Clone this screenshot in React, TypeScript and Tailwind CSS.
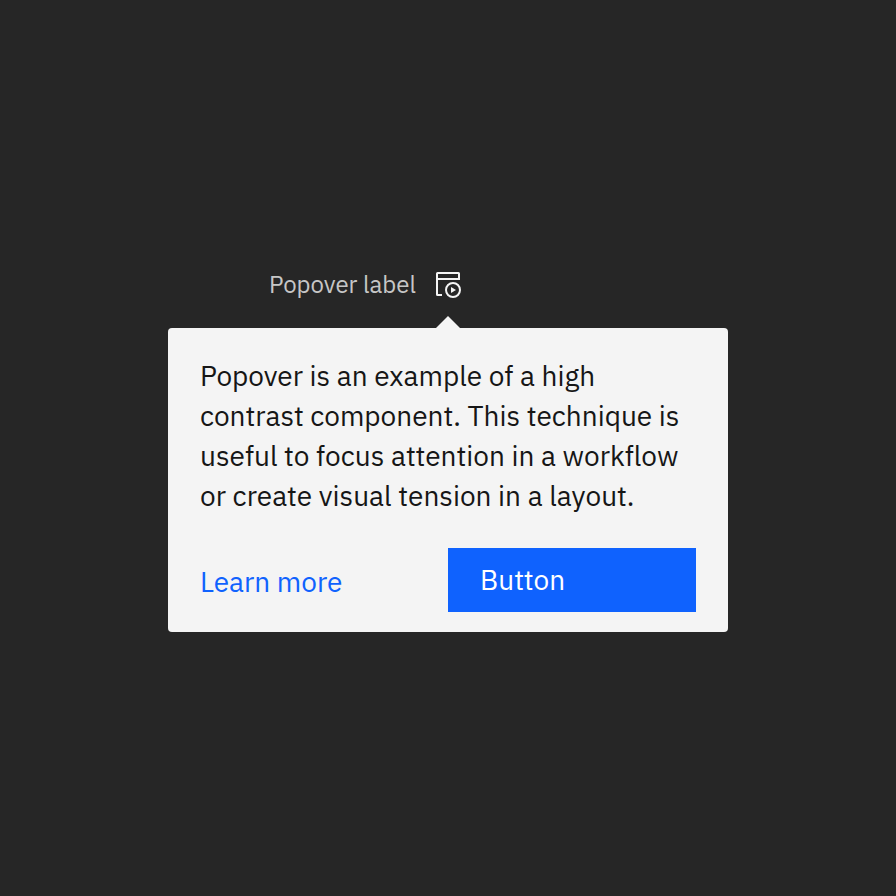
function ModuleIcon() {
  return (
    <svg viewBox="0 0 32 32" className="size-8" fill="currentColor" aria-hidden="true">
      <path d="M10 28H5.5A1.5 1.5 0 0 1 4 26.5v-21A1.5 1.5 0 0 1 5.5 4h21A1.5 1.5 0 0 1 28 5.500V12H6v14h4ZM6 6v4h20V6Z" />
      <path d="M21 14a8 8 0 1 0 0 16 8 8 0 0 0 0-16Zm0 14a6 6 0 1 1 0-12 6 6 0 0 1 0 12Z" />
      <path d="M19 19v6l5-3Z" />
    </svg>
  );
}

export default function App() {
  return (
    <main className="flex min-h-screen flex-col items-center justify-center bg-[#262626] pt-1 font-['IBM_Plex_Sans','Noto_Sans',sans-serif]">
      <section className="w-full max-w-[560px]">
        <div className="grid grid-cols-[1fr_auto_1fr] items-center gap-4">
          <span id="popover-label" className="justify-self-end text-2xl leading-8 text-[#c6c6c6]">
            Popover label
          </span>
          <button
            type="button"
            aria-labelledby="popover-label"
            aria-expanded="true"
            className="text-[#f4f4f4]"
          >
            <ModuleIcon />
          </button>
        </div>
        <svg viewBox="0 0 24 12" className="mx-auto mt-4 block h-3 w-6 fill-[#f4f4f4]" aria-hidden="true">
          <path d="M0 12 12 0l12 12Z" />
        </svg>
        <div
          role="dialog"
          aria-labelledby="popover-label"
          className="rounded bg-[#f4f4f4] px-8 pt-7 pb-5 text-[28px] leading-10 text-[#161616]"
        >
          <p>
            Popover is an example of a high contrast component. This technique is useful to focus
            attention in a workflow or create visual tension in a layout.
          </p>
          <div className="mt-8 grid grid-cols-2 items-center">
            <a href="#" className="justify-self-start pt-1 text-[#0f62fe]">
              Learn more
            </a>
            <button type="button" className="h-16 bg-[#0f62fe] px-8 text-left text-white">
              Button
            </button>
          </div>
        </div>
      </section>
    </main>
  );
}
